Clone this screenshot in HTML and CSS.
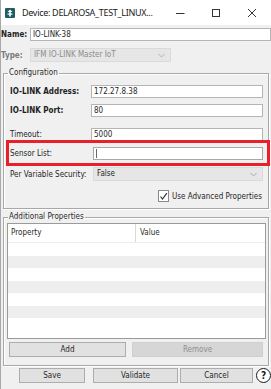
FILE: index.html
```html
<!DOCTYPE html>
<html>
<head>
<meta charset="utf-8">
<link rel="stylesheet" href="styles.css">
</head>
<body>
<div class="window">
  <div class="titlebar">
    <svg class="app-icon" width="10" height="10" viewBox="0 0 10 10">
      <rect x="0" y="0" width="10" height="10" rx="1" fill="#1d5e62"/>
      <path d="M5 1.5 L7.5 4 H2.5 Z" fill="#fff"/>
      <rect x="4.2" y="3.5" width="1.6" height="5" fill="#fff"/>
      <rect x="2.5" y="5.5" width="5" height="1.2" fill="#fff"/>
    </svg>
    <span class="title">Device: DELAROSA_TEST_LINUX...</span>
    <div class="controls">
      <span class="ctl"><svg width="10" height="10" viewBox="0 0 10 10"><path d="M1 5.5 H9.5" stroke="#333" stroke-width="1"/></svg></span>
      <span class="ctl"><svg width="10" height="10" viewBox="0 0 10 10"><rect x="1.5" y="1.5" width="7" height="7" fill="none" stroke="#333" stroke-width="1"/></svg></span>
      <span class="ctl"><svg width="10" height="10" viewBox="0 0 10 10"><path d="M1 1 L9 9 M9 1 L1 9" stroke="#333" stroke-width="1"/></svg></span>
    </div>
  </div>

  <div class="content">
    <div class="top-row">
      <span class="top-label bold">Name:</span>
      <div class="field name-field">IO-LINK-38</div>
    </div>
    <div class="top-row type-row">
      <span class="top-label bold muted">Type:</span>
      <div class="select disabled type-select">
        <span>IFM IO-LINK Master IoT</span>
        <svg class="chev" width="7" height="5" viewBox="0 0 7 5"><path d="M0.5 1 L3.5 4 L6.5 1" fill="none" stroke="#b0b0b0" stroke-width="1"/></svg>
      </div>
    </div>

    <fieldset class="group config">
      <legend>Configuration</legend>
      <div class="row">
        <span class="label wide bold">IO-LINK Address:</span>
        <div class="field grow">172.27.8.38</div>
      </div>
      <div class="row port-row">
        <span class="label wide bold">IO-LINK Port:</span>
        <div class="field grow">80</div>
      </div>
      <div class="row timeout-row">
        <span class="label wide">Timeout:</span>
        <div class="field grow">5000</div>
      </div>
      <div class="row sensor-row highlighted">
        <span class="label wider">Sensor List:</span>
        <div class="field grow focused"><span class="caret"></span></div>
      </div>
      <div class="row pvs-row">
        <span class="label wider">Per Variable Security:</span>
        <div class="select grow">
          <span>False</span>
          <svg class="chev" width="7" height="5" viewBox="0 0 7 5"><path d="M0.5 1 L3.5 4 L6.5 1" fill="none" stroke="#a8a8a8" stroke-width="1"/></svg>
        </div>
      </div>
      <div class="row check-row">
        <span class="checkbox"><svg width="9" height="9" viewBox="0 0 9 9"><path d="M1.5 4.5 L3.5 7 L7.8 1.2" fill="none" stroke="#333" stroke-width="1.2"/></svg></span>
        <span class="check-label">Use Advanced Properties</span>
      </div>
    </fieldset>

    <fieldset class="group props">
      <legend>Additional Properties</legend>
      <div class="table">
        <div class="thead">
          <div class="th col-prop">Property</div>
          <div class="th col-val">Value</div>
        </div>
        <div class="tbody">
          <div class="tr"></div>
          <div class="tr alt"></div>
          <div class="tr"></div>
          <div class="tr alt"></div>
          <div class="tr"></div>
          <div class="tr alt"></div>
          <div class="tr fill"></div>
        </div>
      </div>
      <div class="btn-row">
        <div class="btn add-btn">Add</div>
        <div class="btn remove-btn disabled-btn">Remove</div>
      </div>
    </fieldset>

    <div class="footer">
      <div class="btn save-btn">Save</div>
      <div class="btn validate-btn">Validate</div>
      <div class="btn cancel-btn">Cancel</div>
      <span class="help">?</span>
    </div>
  </div>
</div>
</body>
</html>
```

FILE: styles.css
```css
* { box-sizing: border-box; }
html, body { margin: 0; padding: 0; }
body {
  width: 271px;
  height: 389px;
  overflow: hidden;
  background: #f0f0f0;
  font-family: "DejaVu Sans Condensed", "DejaVu Sans", sans-serif;
  font-stretch: condensed;
  font-size: 8px;
  color: #1f1f1f;
}
.window {
  height: 389px;
  display: flex;
  flex-direction: column;
  border-left: 1px solid #a9a9a9;
}
.titlebar {
  height: 25px;
  flex: none;
  background: #ffffff;
  display: flex;
  align-items: flex-start;
  padding-left: 4px;
}
.app-icon { margin-top: 8px; flex: none; }
.title {
  margin-left: 7px;
  margin-top: 6px;
  font-family: "Noto Sans", "Liberation Sans", sans-serif;
  font-stretch: normal;
  font-size: 9px;
  letter-spacing: -0.3px;
  line-height: 13px;
  color: #1a1a1a;
  white-space: nowrap;
}
.controls {
  margin-left: auto;
  margin-right: 1px;
  display: flex;
}
.ctl {
  width: 36px;
  height: 25px;
  display: flex;
  align-items: center;
  justify-content: center;
}
.content { flex: 1; display: flex; flex-direction: column; }
.bold { font-weight: bold; }
.muted { color: #7a7a7a; }
.top-row {
  display: flex;
  align-items: center;
  height: 13px;
  margin-top: 3px;
}
.type-row { margin-top: 7px; height: 14px; }
.top-label { width: 29px; flex: none; }
.field {
  height: 13px;
  background: #fff;
  border: 1px solid #b5b5b5;
  padding-left: 2px;
  line-height: 11px;
  white-space: nowrap;
  position: relative;
}
.name-field { flex: 1; }
.select {
  height: 14px;
  background: #e6e6e6;
  border: 1px solid #dadada;
  display: flex;
  align-items: center;
  justify-content: space-between;
  padding: 0 5px 0 3px;
  line-height: 12px;
}
.select.disabled { color: #8c8c8c; }
.type-select { width: 141px; }
.chev { flex: none; }
.group {
  margin: 6px 2px 0 2px;
  border: 1px solid #a8a8a8;
  box-shadow: inset 1px 1px 0 #fff, 1px 1px 0 #fff;
  min-width: 0;
}
.group legend {
  font-size: 8px;
  line-height: 10px;
  padding: 0 1px;
  color: #2a2a2a;
}
.config { padding: 7px 5px 6px 6px; }
.config legend { margin-left: -2px; }
.row {
  display: flex;
  align-items: center;
  height: 13px;
}
.port-row { margin-top: 6px; }
.timeout-row { margin-top: 11px; }
.sensor-row { margin-top: 6px; }
.pvs-row { margin-top: 7px; height: 14px; }
.check-row { margin-top: 9px; height: 12px; }
.label { flex: none; white-space: nowrap; }
.label.wide { width: 81px; }
.label.wider { width: 83px; }
.grow { flex: 1; }
.highlighted { position: relative; }
.highlighted::after {
  content: "";
  position: absolute;
  top: -7px;
  bottom: -6px;
  left: -4px;
  right: -7px;
  border: 3px solid #e8202b;
  pointer-events: none;
}
.focused { border-color: #a9a9a9; }
.caret {
  position: absolute;
  left: 2px;
  top: 1px;
  width: 1px;
  height: 9px;
  background: #6a6a6a;
}
.checkbox {
  margin-left: 148px;
  width: 11px;
  height: 12px;
  border: 1px solid #8a8a8a;
  background: #fff;
  display: flex;
  align-items: center;
  justify-content: center;
  flex: none;
}
.check-label { margin-left: 3px; white-space: nowrap; }
.props { margin-top: 3px; padding: 1px 2px 8px 3px; }
.props legend { margin-left: 1px; }
.table {
  height: 116px;
  border: 1px solid #9a9a9a;
  background: #fff;
  display: flex;
  flex-direction: column;
}
.thead {
  height: 19px;
  display: flex;
  border-bottom: 1px solid #ececec;
  flex: none;
}
.th {
  line-height: 18px;
  padding-left: 3px;
  color: #2a2a2a;
}
.col-prop { width: 128px; border-right: 1px solid #d9d9d9; }
.col-val { flex: 1; padding-left: 4px; }
.tbody { flex: 1; display: flex; flex-direction: column; }
.tr { height: 12.5px; background: #fff; flex: none; }
.tr.alt { background: #eeeeee; }
.tr.fill { flex: 1; }
.btn-row { display: flex; margin-top: 3px; }
.btn {
  height: 15px;
  background: #e1e1e1;
  border: 1px solid #adadad;
  display: flex;
  align-items: center;
  justify-content: center;
  color: #1f1f1f;
  flex: none;
}
.add-btn { margin-left: 2px; width: 117px; }
.remove-btn { margin-left: 6px; width: 131px; }
.disabled-btn { background: #d6d6d6; border-color: #cfcfcf; color: #8e8e8e; }
.footer { display: flex; align-items: center; margin-top: 2px; height: 15px; }
.save-btn { margin-left: 18px; width: 66px; }
.validate-btn { margin-left: 8px; width: 85px; }
.cancel-btn { margin-left: 2px; width: 73px; }
.help {
  margin-left: 3px;
  width: 15px;
  height: 15px;
  border: 1.5px solid #1a1a1a;
  border-radius: 50%;
  display: flex;
  align-items: center;
  justify-content: center;
  font-family: "DejaVu Sans", sans-serif;
  font-weight: bold;
  font-size: 10px;
  line-height: 10px;
  color: #1a1a1a;
  background: #fff;
  flex: none;
}
```
